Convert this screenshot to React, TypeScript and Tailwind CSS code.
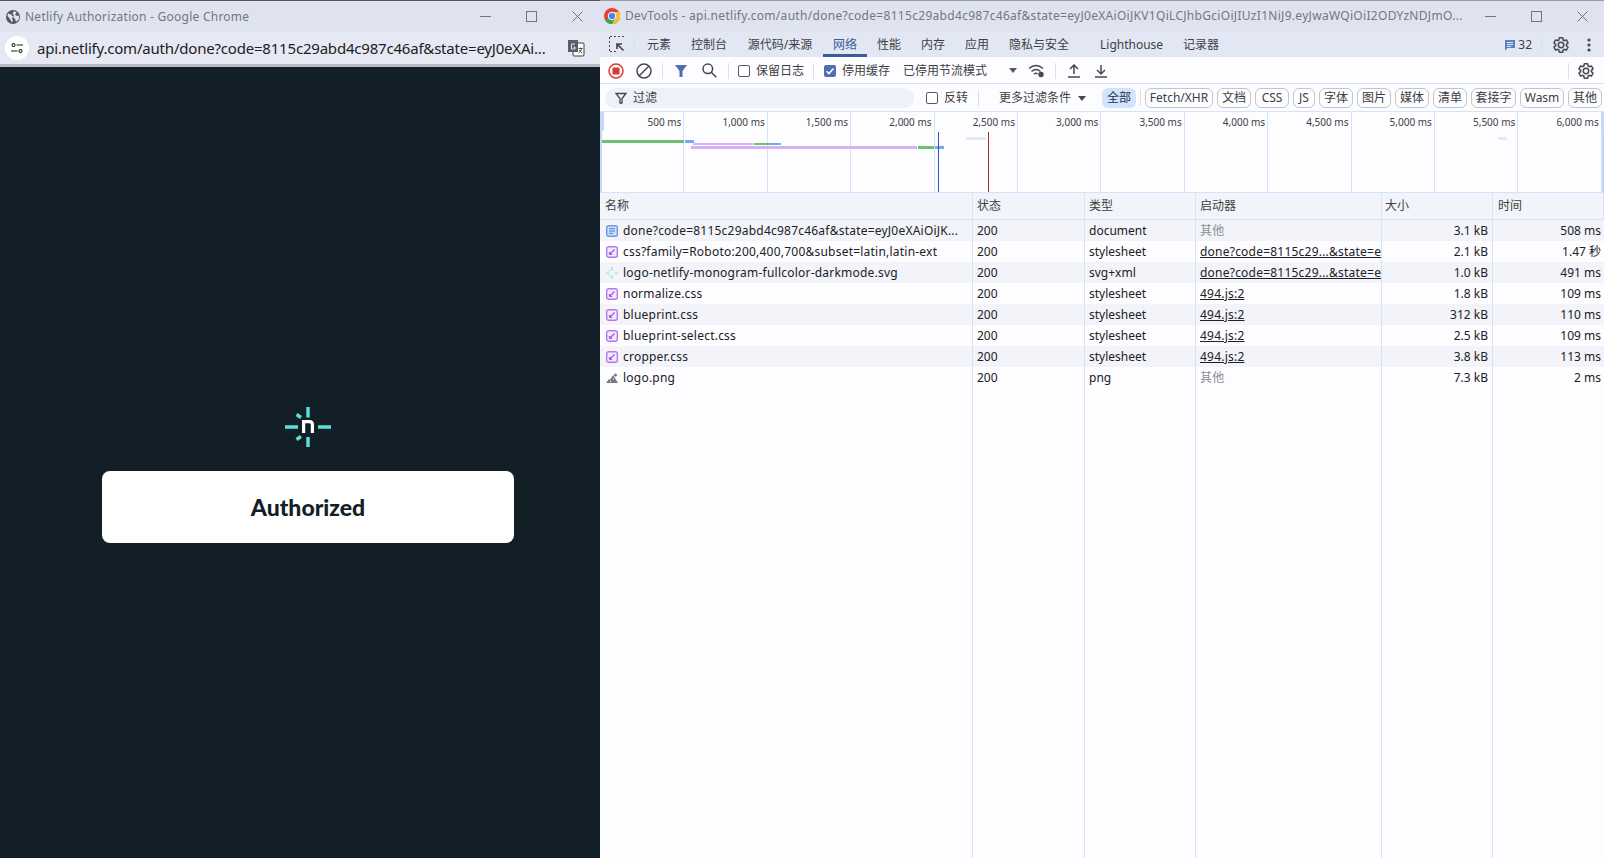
import type { ReactNode } from "react";

const UI_FONT = "font-['Noto_Sans','Noto_Sans_CJK_SC',sans-serif]";

const TABS = [
    { label: "元素", cls: "w-[44px]" },
    { label: "控制台", cls: "w-[56px]" },
    { label: "源代码/来源", cls: "w-[86px]" },
    { label: "网络", cls: "w-[44px]", active: true },
    { label: "性能", cls: "w-[44px]" },
    { label: "内存", cls: "w-[44px]" },
    { label: "应用", cls: "w-[44px]" },
    { label: "隐私与安全", cls: "w-[80px]" },
    { label: "Lighthouse", cls: "w-[87px] pl-[21px] !justify-start" },
    { label: "记录器", cls: "w-[68px] pl-[2px]" },
];

const CHIPS = [
    { label: "Fetch/XHR", cls: "w-[68px]" },
    { label: "文档", cls: "w-[34px]" },
    { label: "CSS", cls: "w-[34px]" },
    { label: "JS", cls: "w-[22px]" },
    { label: "字体", cls: "w-[34px]" },
    { label: "图片", cls: "w-[34px]" },
    { label: "媒体", cls: "w-[34px]" },
    { label: "清单", cls: "w-[34px]" },
    { label: "套接字", cls: "w-[45px]" },
    { label: "Wasm", cls: "w-[44px]" },
    { label: "其他", cls: "w-[34px]" },
];

const TICKS = ["500 ms", "1,000 ms", "1,500 ms", "2,000 ms", "2,500 ms", "3,000 ms", "3,500 ms", "4,000 ms", "4,500 ms", "5,000 ms", "5,500 ms", "6,000 ms"];

const BARS = [
    { cls: "left-[2px] top-[28px] h-[3px] w-[82px] bg-[#6cc070]" },
    { cls: "left-[85px] top-[28px] h-[3px] w-[9px] bg-[#7aa7f5]" },
    { cls: "left-[93px] top-[31px] h-[2px] w-[60px] bg-[#d7b1f7]" },
    { cls: "left-[154px] top-[31px] h-[2px] w-[17px] bg-[#6cc070]" },
    { cls: "left-[171px] top-[31px] h-[2px] w-[10px] bg-[#7aa7f5]" },
    { cls: "left-[91px] top-[34px] h-[3px] w-[226px] bg-[#d7b1f7]" },
    { cls: "left-[318px] top-[34px] h-[3px] w-[16px] bg-[#6cc070]" },
    { cls: "left-[335px] top-[34px] h-[3px] w-[9px] bg-[#7aa7f5]" },
    { cls: "left-[366px] top-[25px] h-[3px] w-[20px] bg-[#e6e8ee]" },
    { cls: "left-[898px] top-[25px] h-[3px] w-[9px] bg-[#e6e8ee]" },
];

type Row = { icon: "doc" | "css" | "logo" | "img"; name: string; type: string; init: string; link?: boolean; size: string; time: string };

const ROWS: Row[] = [
    { icon: "doc", name: "done?code=8115c29abd4c987c46af&state=eyJ0eXAiOiJK...", type: "document", init: "其他", size: "3.1 kB", time: "508 ms" },
    { icon: "css", name: "css?family=Roboto:200,400,700&subset=latin,latin-ext", type: "stylesheet", init: "done?code=8115c29...&state=eyJ0eXAiOiJ", link: true, size: "2.1 kB", time: "1.47 秒" },
    { icon: "logo", name: "logo-netlify-monogram-fullcolor-darkmode.svg", type: "svg+xml", init: "done?code=8115c29...&state=eyJ0eXAiOiJ", link: true, size: "1.0 kB", time: "491 ms" },
    { icon: "css", name: "normalize.css", type: "stylesheet", init: "494.js:2", link: true, size: "1.8 kB", time: "109 ms" },
    { icon: "css", name: "blueprint.css", type: "stylesheet", init: "494.js:2", link: true, size: "312 kB", time: "110 ms" },
    { icon: "css", name: "blueprint-select.css", type: "stylesheet", init: "494.js:2", link: true, size: "2.5 kB", time: "109 ms" },
    { icon: "css", name: "cropper.css", type: "stylesheet", init: "494.js:2", link: true, size: "3.8 kB", time: "113 ms" },
    { icon: "img", name: "logo.png", type: "png", init: "其他", size: "7.3 kB", time: "2 ms" },
];

const COLS = "grid grid-cols-[373px_112px_111px_186px_111px_1fr]";
const COG = "M19.14 12.94c.04-.3.06-.61.06-.94 0-.32-.02-.64-.07-.94l2.03-1.58a.49.49 0 0 0 .12-.61l-1.92-3.32a.488.488 0 0 0-.59-.22l-2.39.96c-.5-.38-1.03-.7-1.62-.94l-.36-2.54a.484.484 0 0 0-.48-.41h-3.84c-.24 0-.43.17-.47.41l-.36 2.54c-.59.24-1.13.57-1.62.94l-2.39-.96c-.22-.08-.47 0-.59.22L2.74 8.87c-.12.21-.08.47.12.61l2.03 1.58c-.05.3-.09.63-.09.94s.02.64.07.94l-2.03 1.58a.49.49 0 0 0-.12.61l1.92 3.32c.12.22.37.29.59.22l2.39-.96c.5.38 1.03.7 1.62.94l.36 2.54c.05.24.24.41.48.41h3.84c.24 0 .44-.17.47-.41l.36-2.54c.59-.24 1.13-.56 1.62-.94l2.39.96c.22.08.47 0 .59-.22l1.92-3.32c.12-.22.07-.47-.12-.61l-2.01-1.58zM12 15.6c-1.98 0-3.6-1.62-3.6-3.6s1.62-3.6 3.6-3.6 3.6 1.62 3.6 3.6-1.62 3.6-3.6 3.6z";

function Cog() {
    return (
        <svg width="18" height="18" viewBox="0 0 24 24" fill="none" stroke="#474a50" strokeWidth="2">
            <path d={COG} />
        </svg>
    );
}

function WinControls({ cls = "pr-[17px]" }: { cls?: string }) {
    const color = "#70747c";
    return (
        <div className={`flex items-center gap-[35px] shrink-0 ${cls}`}>
            <svg width="11" height="11" viewBox="0 0 11 11" stroke={color} fill="none"><path d="M0 5.5h11" /></svg>
            <svg width="11" height="11" viewBox="0 0 11 11" stroke={color} fill="none"><rect x=".5" y=".5" width="10" height="10" /></svg>
            <svg width="11" height="11" viewBox="0 0 11 11" stroke={color} fill="none"><path d="M.5.5l10 10M10.5.5l-10 10" /></svg>
        </div>
    );
}

function VDivider({ cls }: { cls: string }) {
    return <div className={`w-px h-[16px] bg-[#d3e0f7] shrink-0 ${cls}`} />;
}

function Check({ checked, cls }: { checked?: boolean; cls: string }) {
    return checked ? (
        <span className={`w-[12px] h-[12px] rounded-[2px] bg-[#4f6fb0] flex items-center justify-center shrink-0 ${cls}`}>
            <svg width="10" height="10" viewBox="0 0 10 10" fill="none" stroke="#fff" strokeWidth="1.5"><path d="M1.5 5.2l2.4 2.4 4.6-5" /></svg>
        </span>
    ) : (
        <span className={`w-[12px] h-[12px] rounded-[2px] border border-[#55585e] bg-white shrink-0 ${cls}`} />
    );
}

function FileIcon({ kind }: { kind: Row["icon"] }) {
    if (kind === "doc") {
        return (
            <svg width="12" height="12" viewBox="0 0 12 12">
                <rect x=".7" y=".7" width="10.6" height="10.6" rx="2" fill="#cfe0fd" stroke="#6f96e8" strokeWidth="1.4" />
                <path d="M3 3.7h6M3 6h6M3 8.3h4" stroke="#5079d8" />
            </svg>
        );
    }
    if (kind === "css") {
        return (
            <svg width="12" height="12" viewBox="0 0 12 12">
                <rect x=".7" y=".7" width="10.6" height="10.6" rx="2" fill="#f3e8ff" stroke="#b57aea" strokeWidth="1.4" />
                <path d="M3.5 8.5l5-5M3.5 8.5h2.5M3.5 8.5V6" stroke="#9d52e0" strokeWidth="1.2" fill="none" />
            </svg>
        );
    }
    if (kind === "logo") {
        return (
            <svg width="12" height="12" viewBox="0 0 12 12" stroke="#8fdedb" fill="none" strokeWidth="1.2">
                <path d="M6 0v3.5M6 8.5V12M0 6h3.5M8.5 6H12M3 3l1 1M3 9l1-1" />
            </svg>
        );
    }
    return (
        <svg width="12" height="12" viewBox="0 0 12 12" fill="#76797f">
            <path d="M0 11l3-4 1 1 3-5 5 8z" />
            <circle cx="9.5" cy="3" r="1.5" />
            <path d="M4 9.5h1M7 7h1" stroke="#fff" />
        </svg>
    );
}

function Cell({ children, cls = "" }: { children?: ReactNode; cls?: string }) {
    return <div className={`border-r border-[#d3e3fd] overflow-hidden whitespace-nowrap ${cls}`}>{children}</div>;
}

function NetlifyLogo() {
    return (
        <svg width="46" height="40" viewBox="0 0 46 40" fill="none">
            <g stroke="#5cdfd8" strokeWidth="3.4">
                <path d="M23 0v10.5M23 30v10M0 20h13M33 20h13M11.5 7.5l4.5 3M11.5 32.5l4.5-3" />
            </g>
            <path d="M18.6 26V14.6h5.8q3 0 3 3V26" stroke="#fff" strokeWidth="3.2" />
        </svg>
    );
}

function LeftWindow() {
    return (
        <div className="w-[600px] h-full flex flex-col shrink-0">
            <div className="h-px bg-[#55585e]" />
            <div className="h-[31px] bg-[#dfe3ef] flex items-center pl-[6px] justify-between">
                <div className="flex items-center">
                    <svg width="14" height="14" viewBox="0 0 14 14">
                        <circle cx="7" cy="7" r="7" fill="#54575c" />
                        <path d="M2 3.5l3 1 2 2-1 2 1 2-1 2L4 9 1.5 6zM8 1l2.5 1.5L9 5l2.5 1 1.5-.5L13 9l-3 3-1-3-2-2 1-1.5-1.5-2z" fill="#dfe3ef" />
                    </svg>
                    <span className="ml-[5px] text-[12px] text-[#73777f] tracking-[0.25px]">Netlify Authorization - Google Chrome</span>
                </div>
                <WinControls />
            </div>
            <div className="h-[32px] bg-[#e6e9f3] flex items-center pl-[5px] justify-between">
                <div className="flex items-center min-w-0">
                    <div className="w-[24px] h-[24px] rounded-full bg-white flex items-center justify-center shrink-0">
                        <svg width="12" height="12" viewBox="0 0 12 12" fill="none" stroke="#1f2024" strokeWidth="1.1">
                            <circle cx="2.5" cy="3" r="1.5" /><path d="M5.5 3H12M0 9h6.5" /><circle cx="9.5" cy="9" r="1.5" />
                        </svg>
                    </div>
                    <span className="ml-[8px] text-[15px] text-[#1f2024] whitespace-nowrap tracking-[-0.2px]">api.netlify.com/auth/done?code=8115c29abd4c987c46af&amp;state=eyJ0eXAi...</span>
                </div>
                <svg width="18" height="18" viewBox="0 0 18 18" className="mr-[15px] shrink-0">
                    <rect x="6" y="4" width="11" height="13" rx="1" fill="#fff" stroke="#3c4043" />
                    <path d="M1 1h10v12H1z" fill="#5b5e63" />
                    <path d="M8 5H4.5v5H8V8H6.5" stroke="#e6e9f3" fill="none" />
                    <path d="M11.5 9.5h4M13.5 8.5v1M14.8 9.5q-1 3-3.3 4.5M12.3 11q1 2 3 3" stroke="#3c4043" fill="none" strokeWidth=".9" />
                </svg>
            </div>
            <div className="h-[3px] bg-[#b9bbc0]" />
            <div className="flex-1 bg-[#131f27] flex flex-col items-center pt-[340px] pl-[16px]">
                <NetlifyLogo />
                <div className="mt-[24px] w-[412px] h-[72px] bg-white rounded-[8px] flex items-center justify-center">
                    <span className="font-['Lato',sans-serif] font-black text-[23px] text-[#131f27]">Authorized</span>
                </div>
            </div>
        </div>
    );
}

function TitleBar() {
    return (
        <>
            <div className="h-px bg-[#9a9ca3]" />
            <div className="h-[30px] bg-[#dfe3ef] flex items-center justify-between pl-[4px]">
                <div className="flex items-center min-w-0">
                    <svg width="16" height="16" viewBox="0 0 16 16" className="shrink-0">
                        <circle cx="8" cy="8" r="8" fill="#e34134" />
                        <path d="M8 8l-7 4a8 8 0 0 0 7 4 8 8 0 0 0 6.9-12z" fill="#34a853" />
                        <path d="M15 4H8l3.5 6L8 16a8 8 0 0 0 7-12z" fill="#fbc02d" />
                        <circle cx="8" cy="8" r="3.8" fill="#4285f4" stroke="#fff" />
                    </svg>
                    <span className="ml-[5px] text-[12px] text-[#73777f] whitespace-nowrap tracking-[0.3px]">DevTools - api.netlify.com/auth/done?code=8115c29abd4c987c46af&amp;state=eyJ0eXAiOiJKV1QiLCJhbGciOiJIUzI1NiJ9.eyJwaWQiOiI2ODYzNDJmO...</span>
                </div>
                <WinControls cls="pr-[16px]" />
            </div>
        </>
    );
}

function TabBar() {
    return (
        <div className="h-[26px] bg-[#e3e7f3] flex items-center">
            <svg width="16" height="16" viewBox="0 0 16 16" fill="none" stroke="#45484e" className="ml-[9px] shrink-0">
                <path d="M1 .5h2M5 .5h2M9 .5h2M13 .5h2M.5 1v2M.5 5v2M.5 9v2M.5 13v2M1 15.5h2M5 15.5h2" strokeWidth="1" />
                <path d="M14.5 14.5L8.5 8.5M8 13V8h5" strokeWidth="1.7" />
            </svg>
            <VDivider cls="ml-[9px]" />
            <div className="flex h-full ml-[2px]">
                {TABS.map((t) => (
                    <div
                        key={t.label}
                        className={`flex items-center justify-center text-[12px] shrink-0 ${t.cls} ${t.active ? "text-[#3a5a9c] border-b-[3px] border-[#3a5a9c] pt-[5px]" : "text-[#3c3f44] pt-[2px]"}`}
                    >
                        {t.label}
                    </div>
                ))}
            </div>
            <div className="ml-auto flex items-center text-[12px] text-[#3c3f44] pt-[1px]">
                <svg width="12" height="12" viewBox="0 0 12 12">
                    <path d="M1 1h10v8H3.5L1 11.5z" fill="#5a80c9" />
                    <path d="M3 3.5h6M3 5.5h6M3 7.5h4" stroke="#e3e7f3" />
                </svg>
                <span className="ml-[2px]">32</span>
                <VDivider cls="ml-[9px]" />
                <span className="ml-[10px] flex"><Cog /></span>
                <svg width="4" height="14" viewBox="0 0 4 14" fill="#45484e" className="ml-[17px] mr-[13px]">
                    <circle cx="2" cy="2" r="1.6" /><circle cx="2" cy="7" r="1.6" /><circle cx="2" cy="12" r="1.6" />
                </svg>
            </div>
        </div>
    );
}

function Toolbar() {
    return (
        <div className="h-[27px] bg-[#fdfcff] border-b border-[#d3e3fd] flex items-center text-[12px] text-[#3c3f44] pt-[1px]">
            <svg width="16" height="16" viewBox="0 0 16 16" className="ml-[8px] shrink-0">
                <circle cx="8" cy="8" r="7" fill="none" stroke="#d93a30" strokeWidth="1.5" />
                <rect x="4.5" y="4.5" width="7" height="7" rx="1" fill="#d93a30" />
            </svg>
            <svg width="16" height="16" viewBox="0 0 16 16" fill="none" stroke="#45484e" strokeWidth="1.5" className="ml-[12px] shrink-0">
                <circle cx="8" cy="8" r="7" /><path d="M3 13L13 3" />
            </svg>
            <VDivider cls="ml-[10px]" />
            <svg width="12" height="12" viewBox="0 0 12 12" fill="#4f6fb0" className="ml-[12px] shrink-0"><path d="M0 0h12L7.5 6v6h-3V6z" /></svg>
            <svg width="15" height="15" viewBox="0 0 15 15" fill="none" stroke="#45484e" strokeWidth="1.5" className="ml-[15px] shrink-0">
                <circle cx="5.8" cy="5.8" r="4.8" /><path d="M9.3 9.3l5 5" />
            </svg>
            <VDivider cls="ml-[11px]" />
            <Check cls="ml-[9px]" />
            <span className="ml-[6px]">保留日志</span>
            <VDivider cls="ml-[9px]" />
            <Check checked cls="ml-[10px]" />
            <span className="ml-[6px]">停用缓存</span>
            <span className="ml-[13px]">已停用节流模式</span>
            <svg width="8" height="5" viewBox="0 0 8 5" fill="#55585e" className="ml-[22px] shrink-0"><path d="M0 0h8L4 5z" /></svg>
            <svg width="17" height="14" viewBox="0 0 17 14" fill="none" stroke="#45484e" strokeWidth="1.4" className="ml-[11px] shrink-0">
                <path d="M1 4.5q7-6 14 0M3.5 7.5q4.5-4 9 0M6 10q2-1.5 3.5 0" />
                <circle cx="13" cy="10.5" r="2" fill="#45484e" />
            </svg>
            <VDivider cls="ml-[10px]" />
            <svg width="14" height="14" viewBox="0 0 14 14" fill="none" stroke="#45484e" strokeWidth="1.5" className="ml-[11px] shrink-0">
                <path d="M7 10V1.5M3 5l4-4 4 4M1 13h12" />
            </svg>
            <svg width="14" height="14" viewBox="0 0 14 14" fill="none" stroke="#45484e" strokeWidth="1.5" className="ml-[13px] shrink-0">
                <path d="M7 1v8.5M3 6l4 4 4-4M1 13h12" />
            </svg>
            <VDivider cls="ml-auto" />
            <span className="ml-[8px] mr-[9px] flex"><Cog /></span>
        </div>
    );
}

function FilterBar() {
    return (
        <div className="h-[27px] bg-[#fdfcff] flex items-center text-[12px] text-[#3c3f44] overflow-hidden pt-[1px]">
            <div className="ml-[5px] w-[309px] h-[20px] rounded-full bg-[#eef1f8] flex items-center pl-[10px] shrink-0">
                <svg width="12" height="12" viewBox="0 0 12 12" fill="none" stroke="#45484e" strokeWidth="1.3"><path d="M1 1.5h10L7 6.5V11H5V6.5z" /></svg>
                <span className="ml-[6px]">过滤</span>
            </div>
            <Check cls="ml-[12px]" />
            <span className="ml-[6px]">反转</span>
            <VDivider cls="ml-[10px]" />
            <span className="ml-[20px] whitespace-nowrap">更多过滤条件</span>
            <svg width="8" height="5" viewBox="0 0 8 5" fill="#45484e" className="ml-[7px] shrink-0"><path d="M0 0h8L4 5z" /></svg>
            <div className="ml-[16px] w-[34px] h-[20px] rounded-[6px] bg-[#d3e3fd] flex items-center justify-center shrink-0 text-[#1f2f4f]">全部</div>
            <VDivider cls="mx-[4px]" />
            <div className="flex gap-[4px] shrink-0">
                {CHIPS.map((c) => (
                    <div key={c.label} className={`h-[20px] rounded-[6px] border border-[#c4c7c5] flex items-center justify-center shrink-0 whitespace-nowrap ${c.cls}`}>
                        {c.label}
                    </div>
                ))}
            </div>
        </div>
    );
}

function Overview() {
    return (
        <div className="relative h-[82px] bg-[#fdfcff] border-y border-[#d3e3fd] flex pl-[1px]">
            {TICKS.map((t) => (
                <div key={t} className="w-[83.4px] shrink-0 border-r border-[#d3e3fd] text-right pr-[2px] pt-[3px] text-[10px] leading-[15px] text-[#3c3f44] whitespace-nowrap">
                    {t}
                </div>
            ))}
            {BARS.map((b) => (
                <div key={b.cls} className={`absolute ${b.cls}`} />
            ))}
            <div className="absolute left-[338px] top-[20px] bottom-0 w-px bg-[#2a55cc]" />
            <div className="absolute left-[388px] top-[20px] bottom-0 w-px bg-[#b3261e]" />
            <div className="absolute left-0 top-0 w-[4px] h-[19px] rounded-b-[2px] bg-[#c4d7f7]" />
            <div className="absolute left-0 top-0 bottom-0 w-[2px] bg-[#c4d7f7]" />
            <div className="absolute right-0 top-0 w-[3px] h-[19px] rounded-b-[2px] bg-[#c4d7f7]" />
            <div className="absolute right-0 top-0 bottom-0 w-[2px] bg-[#c4d7f7]" />
        </div>
    );
}

function NetworkTable() {
    const heads = ["名称", "状态", "类型", "启动器", "大小", "时间"];
    return (
        <div className="flex-1 flex flex-col text-[12px] text-[#202124] bg-[#fdfcff]">
            <div className={`${COLS} h-[27px] bg-[#f2f4f9] border-b border-[#d3e3fd] shrink-0`}>
                {heads.map((h, i) => (
                    <Cell key={h} cls={`flex items-center text-[#3c3f44] ${i === 0 ? "pl-[5px]" : i === 4 ? "pl-[3px]" : i === 5 ? "pl-[5px]" : "pl-[4px]"}`}>{h}</Cell>
                ))}
            </div>
            {ROWS.map((r, i) => (
                <div key={r.name} className={`${COLS} h-[21px] shrink-0 leading-[21px] ${i % 2 === 0 ? "bg-[#f2f4f9]" : ""}`}>
                    <Cell cls="flex items-center pl-[6px]">
                        <span className="shrink-0 flex"><FileIcon kind={r.icon} /></span>
                        <span className="ml-[5px] tracking-[0.22px]">{r.name}</span>
                    </Cell>
                    <Cell cls="pl-[4px]">200</Cell>
                    <Cell cls="pl-[4px]">{r.type}</Cell>
                    <Cell cls={`pl-[4px] tracking-[0.22px] ${r.link ? "underline" : "text-[#8a8d93]"}`}>{r.init}</Cell>
                    <Cell cls="text-right pr-[4px]">{r.size}</Cell>
                    <Cell cls="text-right pr-[3px] border-r-0">{r.time}</Cell>
                </div>
            ))}
            <div className={`${COLS} flex-1`}>
                <Cell />
                <Cell />
                <Cell />
                <Cell />
                <Cell />
            </div>
        </div>
    );
}

export default function App() {
    return (
        <div className={`w-[1604px] h-[858px] flex overflow-hidden bg-white ${UI_FONT}`}>
            <LeftWindow />
            <div className="flex-1 min-w-0 h-full flex flex-col">
                <TitleBar />
                <TabBar />
                <Toolbar />
                <FilterBar />
                <Overview />
                <NetworkTable />
            </div>
        </div>
    );
}
